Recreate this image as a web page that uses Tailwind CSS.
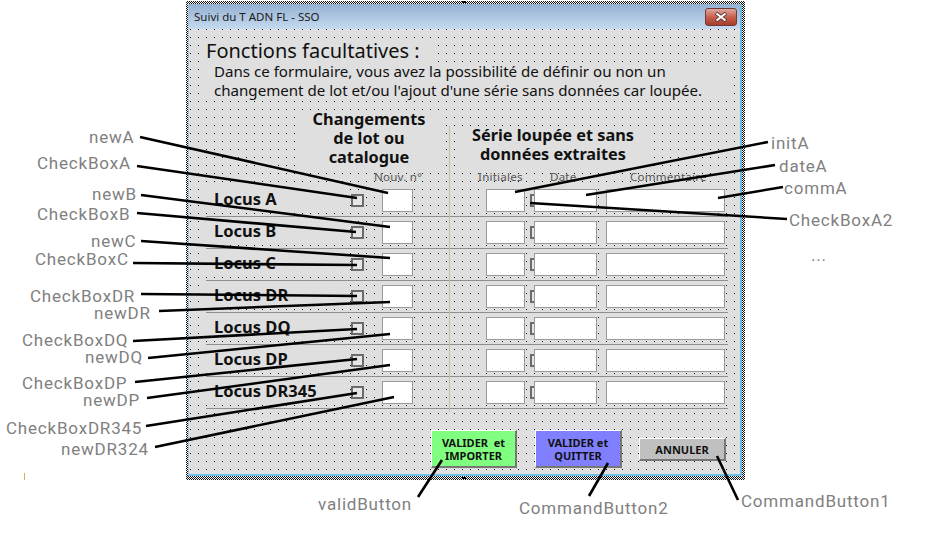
<!DOCTYPE html>
<html><head><meta charset="utf-8"><script src="https://cdn.jsdelivr.net/npm/@tailwindcss/browser@4"></script></head>
<body class="bg-white">
<div class="relative w-[940px] h-[537px] overflow-hidden bg-white font-['Noto_Sans',sans-serif]">

  <!-- selection frame + form window -->
  <div class="absolute left-[186px] top-[1px] w-[559px] h-[479px] pl-[2px] pr-[3px] pt-[3px] pb-[4px] bg-[conic-gradient(#111_25%,#fff_0_50%,#111_0_75%,#fff_0)] bg-[length:2px_2px]">
    <div class="w-full h-full flex flex-col border-l border-l-[#a9c9e2] border-r-2 border-r-[#6db6e0] border-b-2 border-b-[#6fc0e8]">
      <div class="h-[25px] shrink-0 bg-gradient-to-b from-[#94b0d2] to-[#c5daee] flex items-center justify-between pl-[5px] pr-[3px]">
        <span class="text-[11.5px] text-[#1a1a1a]">Suivi du T ADN FL - SSO</span>
        <div class="w-[32px] h-[18px] mt-[1px] rounded-[3px] border border-[#6e3a3a] bg-gradient-to-b from-[#dca79f] via-[#c8604e] to-[#a83c2c] flex items-center justify-center">
          <svg width="14" height="10" viewBox="0 0 14 10"><path d="M2 1 L12 9 M12 1 L2 9" stroke="#5a3030" stroke-width="3.6"/><path d="M2.5 1.5 L11.5 8.5 M11.5 1.5 L2.5 8.5" stroke="#fff" stroke-width="2.2"/></svg>
        </div>
      </div>

      <div class="relative flex-1 bg-[#dfdfdf]">
        <svg class="absolute inset-0" width="551" height="445"><defs><pattern id="d" x="1" y="0" width="8" height="8" patternUnits="userSpaceOnUse"><rect width="1" height="1" fill="#111"/></pattern></defs><rect width="551" height="445" fill="url(#d)"/></svg>
        <div class="absolute left-[260px] top-[97px] w-px h-[286px] bg-[#c9bb9f] z-10"></div>

        <div class="relative flex flex-col pt-[10px] pl-[17px] text-[#111]">
          <div class="h-[23px] w-[225px] bg-[#dfdfdf] text-[20px] leading-[23px] whitespace-nowrap">Fonctions facultatives :</div>
          <div class="h-[38px] w-[524px] pl-[8px] bg-[#dfdfdf] text-[15.1px] leading-[19px] whitespace-nowrap">
            <div>Dans ce formulaire, vous avez la possibilité de définir ou non un</div>
            <div>changement de lot et/ou l'ajout d'une série sans données car loupée.</div>
          </div>

          <div class="h-[85px] flex flex-col">
            <div class="h-[70px] flex pt-[10px]">
              <div class="ml-[92px] w-[142px] h-[57px] bg-[#dfdfdf] text-center font-bold text-[16.3px] leading-[19px]">Changements<br>de lot ou<br>catalogue</div>
              <div class="ml-[18px] w-[190px] h-[41px] mt-[16px] bg-[#dfdfdf] text-center font-bold text-[16.3px] leading-[19px]">Série loupée et sans<br>données extraites</div>
            </div>
            <div class="h-[15px] flex text-[11.6px] leading-[13px] tracking-[0.2px] text-[#555] whitespace-nowrap">
              <span class="ml-[168px] w-[104px] h-[13px]">Nouv. n°</span>
              <span class="w-[72px] h-[13px]">Initiales</span>
              <span class="w-[80px] h-[13px]">Date</span>
              <span class="h-[13px]">Commentaire</span>
            </div>
          </div>

          <div class="w-[522px] flex flex-col">
            <div class="h-[32px] flex items-start pt-[4px] border-b border-[#8f8f8f]">
              <div class="w-[138px] h-[23px] pl-[8px] bg-[#dfdfdf] font-bold text-[16.5px] leading-[20px] whitespace-nowrap">Locus A</div>
              <div class="ml-[7px] mt-[5px] w-[13px] h-[13px] border-2 border-[#6b6b6b] bg-[#e6e6e6]"></div>
              <div class="ml-[18px] w-[31px] h-[23px] border border-[#9a9a9a] bg-white"></div>
              <div class="ml-[73px] w-[39px] h-[23px] border border-[#9a9a9a] bg-white"></div>
              <div class="ml-[5px] -mr-[9px] mt-[5px] w-[13px] h-[13px] border-2 border-[#6b6b6b] bg-[#e6e6e6]"></div>
              <div class="relative w-[63px] h-[23px] border border-[#9a9a9a] bg-white"></div>
              <div class="ml-[9px] w-[119px] h-[23px] border border-[#9a9a9a] bg-white"></div>
            </div>
            <div class="h-[32px] flex items-start pt-[4px] border-b border-[#8f8f8f]">
              <div class="w-[138px] h-[23px] pl-[8px] bg-[#dfdfdf] font-bold text-[16.5px] leading-[20px] whitespace-nowrap">Locus B</div>
              <div class="ml-[7px] mt-[5px] w-[13px] h-[13px] border-2 border-[#6b6b6b] bg-[#e6e6e6]"></div>
              <div class="ml-[18px] w-[31px] h-[23px] border border-[#9a9a9a] bg-white"></div>
              <div class="ml-[73px] w-[39px] h-[23px] border border-[#9a9a9a] bg-white"></div>
              <div class="ml-[5px] -mr-[9px] mt-[5px] w-[13px] h-[13px] border-2 border-[#6b6b6b] bg-[#e6e6e6]"></div>
              <div class="relative w-[63px] h-[23px] border border-[#9a9a9a] bg-white"></div>
              <div class="ml-[9px] w-[119px] h-[23px] border border-[#9a9a9a] bg-white"></div>
            </div>
            <div class="h-[32px] flex items-start pt-[4px] border-b border-[#8f8f8f]">
              <div class="w-[138px] h-[23px] pl-[8px] bg-[#dfdfdf] font-bold text-[16.5px] leading-[20px] whitespace-nowrap">Locus C</div>
              <div class="ml-[7px] mt-[5px] w-[13px] h-[13px] border-2 border-[#6b6b6b] bg-[#e6e6e6]"></div>
              <div class="ml-[18px] w-[31px] h-[23px] border border-[#9a9a9a] bg-white"></div>
              <div class="ml-[73px] w-[39px] h-[23px] border border-[#9a9a9a] bg-white"></div>
              <div class="ml-[5px] -mr-[9px] mt-[5px] w-[13px] h-[13px] border-2 border-[#6b6b6b] bg-[#e6e6e6]"></div>
              <div class="relative w-[63px] h-[23px] border border-[#9a9a9a] bg-white"></div>
              <div class="ml-[9px] w-[119px] h-[23px] border border-[#9a9a9a] bg-white"></div>
            </div>
            <div class="h-[32px] flex items-start pt-[4px] border-b border-[#8f8f8f]">
              <div class="w-[138px] h-[23px] pl-[8px] bg-[#dfdfdf] font-bold text-[16.5px] leading-[20px] whitespace-nowrap">Locus DR</div>
              <div class="ml-[7px] mt-[5px] w-[13px] h-[13px] border-2 border-[#6b6b6b] bg-[#e6e6e6]"></div>
              <div class="ml-[18px] w-[31px] h-[23px] border border-[#9a9a9a] bg-white"></div>
              <div class="ml-[73px] w-[39px] h-[23px] border border-[#9a9a9a] bg-white"></div>
              <div class="ml-[5px] -mr-[9px] mt-[5px] w-[13px] h-[13px] border-2 border-[#6b6b6b] bg-[#e6e6e6]"></div>
              <div class="relative w-[63px] h-[23px] border border-[#9a9a9a] bg-white"></div>
              <div class="ml-[9px] w-[119px] h-[23px] border border-[#9a9a9a] bg-white"></div>
            </div>
            <div class="h-[32px] flex items-start pt-[4px] border-b border-[#8f8f8f]">
              <div class="w-[138px] h-[23px] pl-[8px] bg-[#dfdfdf] font-bold text-[16.5px] leading-[20px] whitespace-nowrap">Locus DQ</div>
              <div class="ml-[7px] mt-[5px] w-[13px] h-[13px] border-2 border-[#6b6b6b] bg-[#e6e6e6]"></div>
              <div class="ml-[18px] w-[31px] h-[23px] border border-[#9a9a9a] bg-white"></div>
              <div class="ml-[73px] w-[39px] h-[23px] border border-[#9a9a9a] bg-white"></div>
              <div class="ml-[5px] -mr-[9px] mt-[5px] w-[13px] h-[13px] border-2 border-[#6b6b6b] bg-[#e6e6e6]"></div>
              <div class="relative w-[63px] h-[23px] border border-[#9a9a9a] bg-white"></div>
              <div class="ml-[9px] w-[119px] h-[23px] border border-[#9a9a9a] bg-white"></div>
            </div>
            <div class="h-[32px] flex items-start pt-[4px] border-b border-[#8f8f8f]">
              <div class="w-[138px] h-[23px] pl-[8px] bg-[#dfdfdf] font-bold text-[16.5px] leading-[20px] whitespace-nowrap">Locus DP</div>
              <div class="ml-[7px] mt-[5px] w-[13px] h-[13px] border-2 border-[#6b6b6b] bg-[#e6e6e6]"></div>
              <div class="ml-[18px] w-[31px] h-[23px] border border-[#9a9a9a] bg-white"></div>
              <div class="ml-[73px] w-[39px] h-[23px] border border-[#9a9a9a] bg-white"></div>
              <div class="ml-[5px] -mr-[9px] mt-[5px] w-[13px] h-[13px] border-2 border-[#6b6b6b] bg-[#e6e6e6]"></div>
              <div class="relative w-[63px] h-[23px] border border-[#9a9a9a] bg-white"></div>
              <div class="ml-[9px] w-[119px] h-[23px] border border-[#9a9a9a] bg-white"></div>
            </div>
            <div class="h-[32px] flex items-start pt-[4px] border-b border-[#8f8f8f]">
              <div class="w-[138px] h-[23px] pl-[8px] bg-[#dfdfdf] font-bold text-[16.5px] leading-[20px] whitespace-nowrap">Locus DR345</div>
              <div class="ml-[7px] mt-[5px] w-[13px] h-[13px] border-2 border-[#6b6b6b] bg-[#e6e6e6]"></div>
              <div class="ml-[18px] w-[31px] h-[23px] border border-[#9a9a9a] bg-white"></div>
              <div class="ml-[73px] w-[39px] h-[23px] border border-[#9a9a9a] bg-white"></div>
              <div class="ml-[5px] -mr-[9px] mt-[5px] w-[13px] h-[13px] border-2 border-[#6b6b6b] bg-[#e6e6e6]"></div>
              <div class="relative w-[63px] h-[23px] border border-[#9a9a9a] bg-white"></div>
              <div class="ml-[9px] w-[119px] h-[23px] border border-[#9a9a9a] bg-white"></div>
            </div>
          </div>

          <div class="mt-[21px] ml-[225px] flex items-start font-bold text-[11px] leading-[13px] text-center text-[#111]">
            <div class="w-[86px] h-[38px] flex items-center justify-center bg-[#80ff80] border-t border-l border-t-white border-l-white border-r-2 border-b-2 border-r-[#777] border-b-[#777]">VALIDER&nbsp; et<br>IMPORTER</div>
            <div class="ml-[18px] w-[87px] h-[38px] flex items-center justify-center bg-[#8080ff] border-t border-l border-t-white border-l-white border-r-2 border-b-2 border-r-[#777] border-b-[#777]">VALIDER et<br>QUITTER</div>
            <div class="ml-[17px] mt-[8px] w-[87px] h-[23px] flex items-center justify-center bg-[#c0c0c0] border-t border-l border-t-white border-l-white border-r-2 border-b-2 border-r-[#777] border-b-[#777]">ANNULER</div>
          </div>
        </div>
      </div>
    </div>
  </div>

  <!-- leader lines -->
  <svg class="absolute inset-0 z-20 pointer-events-none" width="940" height="537" stroke="#000" stroke-width="2.6" fill="none">
    <path d="M140 137 L388 193"/>
    <path d="M137 166 L357 198"/>
    <path d="M141 195 L390 227"/>
    <path d="M137 213 L356 232"/>
    <path d="M141 241 L390 258"/>
    <path d="M133 263 L357 265"/>
    <path d="M141 294 L357 296"/>
    <path d="M159 311 L390 302"/>
    <path d="M133 341 L357 329"/>
    <path d="M148 358 L390 334"/>
    <path d="M135 382 L357 359"/>
    <path d="M147 398 L390 365"/>
    <path d="M146 426 L357 393"/>
    <path d="M155 447 L394 397"/>
    <path d="M768 142 L515 192"/>
    <path d="M775 165 L586 195"/>
    <path d="M783 187 L718 198"/>
    <path d="M787 219 L530 203"/>
    <path d="M442 460 L418 497"/>
    <path d="M608 463 L589 496"/>
    <path d="M717 456 L738 500"/>
    <path d="M462 478 H466 M462 2 H466" stroke-width="2"/>
  </svg>

  <!-- annotation labels -->
  <div class="absolute inset-0 z-30 text-[17px] leading-[20px] tracking-[0.8px] text-[#808080] font-['Roboto',sans-serif] whitespace-nowrap pointer-events-none">
    <span class="absolute left-[89px] top-[127px]">newA</span>
    <span class="absolute left-[37px] top-[153px]">CheckBoxA</span>
    <span class="absolute left-[92px] top-[184px]">newB</span>
    <span class="absolute left-[37px] top-[204px]">CheckBoxB</span>
    <span class="absolute left-[91px] top-[231px]">newC</span>
    <span class="absolute left-[35px] top-[249px]">CheckBoxC</span>
    <span class="absolute left-[30px] top-[286px]">CheckBoxDR</span>
    <span class="absolute left-[94px] top-[303px]">newDR</span>
    <span class="absolute left-[22px] top-[330px]">CheckBoxDQ</span>
    <span class="absolute left-[85px] top-[347px]">newDQ</span>
    <span class="absolute left-[22px] top-[373px]">CheckBoxDP</span>
    <span class="absolute left-[83px] top-[390px]">newDP</span>
    <span class="absolute left-[6px] top-[418px]">CheckBoxDR345</span>
    <span class="absolute left-[61px] top-[439px]">newDR324</span>
    <span class="absolute left-[771px] top-[133px]">initA</span>
    <span class="absolute left-[779px] top-[156px]">dateA</span>
    <span class="absolute left-[784px] top-[178px]">commA</span>
    <span class="absolute left-[789px] top-[210px]">CheckBoxA2</span>
    <span class="absolute left-[811px] top-[245px]">...</span>
    <span class="absolute left-[318px] top-[494px]">validButton</span>
    <span class="absolute left-[519px] top-[498px]">CommandButton2</span>
    <span class="absolute left-[741px] top-[491px]">CommandButton1</span>
  </div>
  <div class="absolute left-[24px] top-[473px] w-px h-[7px] bg-[#e0a868]"></div>
</div>
</body></html>
